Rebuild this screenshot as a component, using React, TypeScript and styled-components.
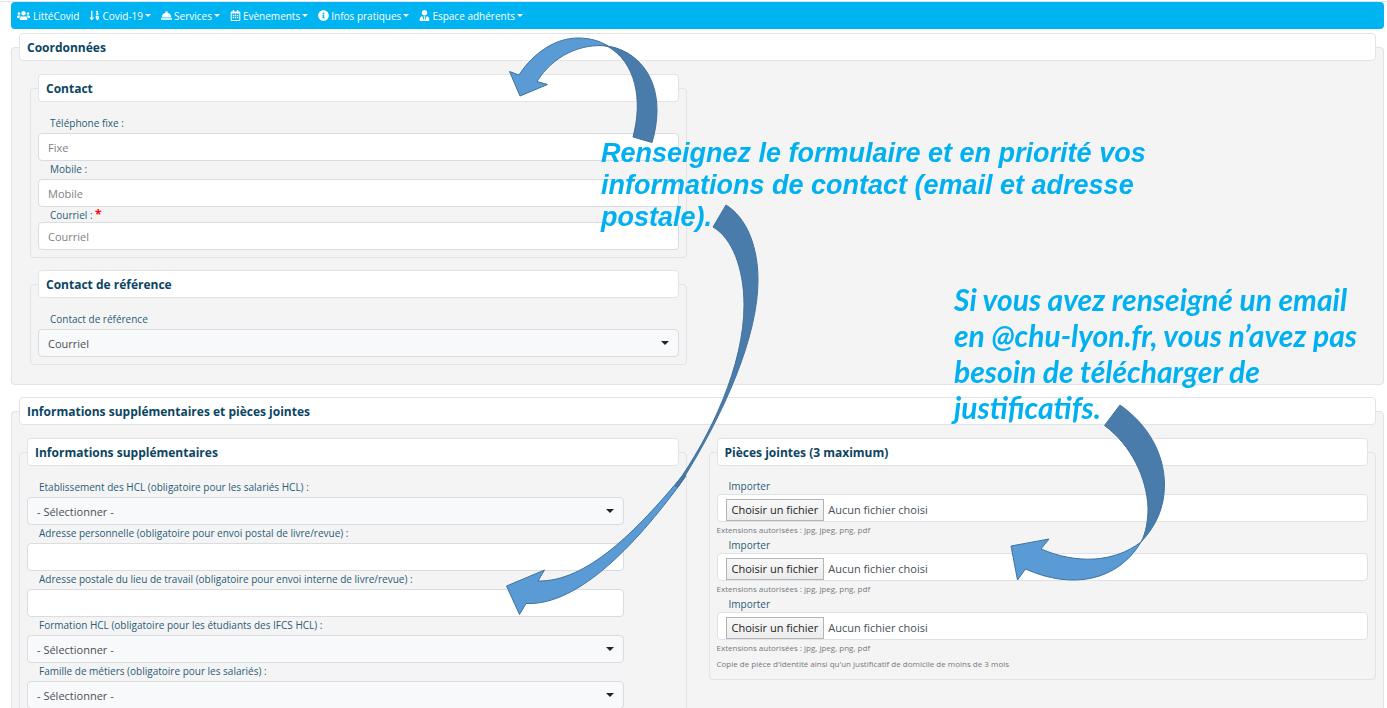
import React from "react";
import styled, { createGlobalStyle } from "styled-components";
import {
  FaUsers,
  FaSortNumericDown,
  FaConciergeBell,
  FaRegCalendarAlt,
  FaInfoCircle,
  FaUserTie,
} from "react-icons/fa";

const GlobalStyle = createGlobalStyle`
  *, *::before, *::after { box-sizing: border-box; }
  body {
    margin: 0;
    background: #fff;
    color: #495057;
    font-family: "Open Sans", "Noto Sans", sans-serif;
    font-size: 11px;
  }
  input, select, button { font: inherit; color: inherit; }
`;

const Page = styled.div`
  position: relative;
  padding-bottom: 24px;
`;

const TopRule = styled.div`
  height: 2px;
  border-bottom: 1px solid #e4e4e4;
`;

const Content = styled.div`
  padding: 0 3px 0 11px;
`;

const Nav = styled.nav`
  display: flex;
  align-items: center;
  gap: 10px;
  height: 27px;
  padding: 0 6px;
  border-radius: 4px;
  background: #00b4f1;
  color: #fff;
  font-size: 10px;
  line-height: 16px;
`;

const NavLink = styled.a`
  display: flex;
  align-items: center;
  gap: 3px;
  color: inherit;
  text-decoration: none;
  white-space: nowrap;
`;

const NavButton = styled.button`
  display: flex;
  align-items: center;
  gap: 2px;
  padding: 0;
  border: 0;
  background: none;
  white-space: nowrap;
  cursor: pointer;

  &::after {
    content: "";
    border-top: 3px solid currentColor;
    border-left: 3px solid transparent;
    border-right: 3px solid transparent;
  }
`;

const Panel = styled.fieldset`
  min-width: 0;
  margin: 0;
  padding: 13px 7px 7px;
  border: 1px solid #e2e3e4;
  border-radius: 4px;
  background: #f4f4f4;
`;

const Section = styled(Panel)<{ $gap: number }>`
  margin-top: ${(p) => p.$gap}px;
  padding-bottom: 19px;
`;

const Title = styled.legend`
  width: 100%;
  height: 28px;
  padding: 0 7px;
  border: 1px solid #e2e3e4;
  border-radius: 4px;
  background: #fff;
  color: #0b4563;
  font-size: 12px;
  font-weight: 700;
  line-height: 27px;
`;

const Columns = styled.div`
  display: grid;
  grid-template-columns: 1fr 1fr;
  gap: 22px;
  align-items: start;
`;

const Stack = styled.div`
  display: grid;
  gap: 12px;
  padding-left: 11px;
`;

const WideFields = styled.div`
  display: grid;
  grid-template-columns: 11fr 1fr;

  & > * { grid-column: 1; }
`;

const Label = styled.label<{ $tight?: boolean }>`
  display: block;
  height: ${(p) => (p.$tight ? 15 : 18)}px;
  padding-left: 12px;
  color: #2a5c76;
  font-size: 10px;
  line-height: ${(p) => (p.$tight ? 15 : 16)}px;
`;

const Required = styled.span`
  color: #f00;
  font-size: 12px;
  font-weight: 700;
`;

const TextBox = styled.input`
  display: block;
  width: 100%;
  height: 28px;
  padding: 0 9px;
  border: 1px solid #d9dce1;
  border-radius: 4px;
  background: #fff;

  &::placeholder { color: #7d8287; opacity: 1; }
`;

const SelectWrap = styled.div`
  position: relative;

  &::after {
    content: "";
    position: absolute;
    top: 12px;
    right: 10px;
    border-top: 4px solid #212529;
    border-left: 4px solid transparent;
    border-right: 4px solid transparent;
    pointer-events: none;
  }
`;

const Select = styled.select`
  display: block;
  width: 100%;
  height: 28px;
  padding: 0 9px;
  border: 1px solid #d9dce1;
  border-radius: 4px;
  background: #f8f9fb;
  appearance: none;
`;

const FileBox = styled.div`
  position: relative;
  display: flex;
  align-items: flex-end;
  gap: 4px;
  height: 28px;
  padding: 0 8px;
  border: 1px solid #dee1e5;
  border-radius: 4px;
  background: #fff;
  line-height: 20px;
`;

const FileInput = styled.input`
  position: absolute;
  inset: 0;
  width: 100%;
  opacity: 0;
  cursor: pointer;
`;

const FileButton = styled.span`
  height: 22px;
  padding: 0 5px;
  border: 1px solid #b4b4b4;
  background: linear-gradient(#f8f8f8, #ececec);
  color: #222;
`;

const FileStatus = styled.span`
  height: 21px;
`;

const Hint = styled.p`
  margin: 0;
  color: #74797e;
  font-size: 8px;
  line-height: 16px;
`;

const Note = styled.p<{ $x: number; $y: number; $w: number }>`
  position: absolute;
  left: ${(p) => p.$x}px;
  top: ${(p) => p.$y}px;
  width: ${(p) => p.$w}px;
  margin: 0;
  color: #00b0f0;
  font-weight: 700;
  font-style: italic;
`;

const ContactNote = styled(Note)`
  font-family: "Liberation Sans", Arial, sans-serif;
  font-size: 27px;
  line-height: 32px;
`;

const ProofNote = styled(Note)`
  font-family: Lato, Carlito, sans-serif;
  font-size: 30px;
  line-height: 36px;
`;

const Arrow = styled.svg<{ $x: number; $y: number }>`
  position: absolute;
  left: ${(p) => p.$x}px;
  top: ${(p) => p.$y}px;
  pointer-events: none;
  stroke: #41719c;
  stroke-width: 1;
  stroke-linejoin: miter;
`;

const menus = [
  { label: "Covid-19", Icon: FaSortNumericDown },
  { label: "Services", Icon: FaConciergeBell },
  { label: "Evènements", Icon: FaRegCalendarAlt },
  { label: "Infos pratiques", Icon: FaInfoCircle },
  { label: "Espace adhérents", Icon: FaUserTie },
];

const details = [
  { id: "etablissement", label: "Etablissement des HCL (obligatoire pour les salariés HCL) :", choice: true },
  { id: "adresse-perso", label: "Adresse personnelle (obligatoire pour envoi postal de livre/revue) :", choice: false },
  { id: "adresse-travail", label: "Adresse postale du lieu de travail (obligatoire pour envoi interne de livre/revue) :", choice: false },
  { id: "formation", label: "Formation HCL (obligatoire pour les étudiants des IFCS HCL) :", choice: true },
  { id: "metiers", label: "Famille de métiers (obligatoire pour les salariés) :", choice: true },
];

function Dropdown({ id, value }: { id: string; value: string }) {
  return (
    <SelectWrap>
      <Select id={id} defaultValue={value}>
        <option>{value}</option>
      </Select>
    </SelectWrap>
  );
}

function Upload({ id }: { id: string }) {
  return (
    <div>
      <Label $tight htmlFor={id}>Importer</Label>
      <FileBox>
        <FileButton>Choisir un fichier</FileButton>
        <FileStatus>Aucun fichier choisi</FileStatus>
        <FileInput id={id} type="file" accept=".jpg,.jpeg,.png,.pdf" />
      </FileBox>
      <Hint>Extensions autorisées : jpg, jpeg, png, pdf</Hint>
    </div>
  );
}

export default function App() {
  return (
    <Page>
      <GlobalStyle />
      <TopRule />
      <Content>
        <Nav>
          <NavLink href="#littecovid">
            <FaUsers size={13} />
            LittéCovid
          </NavLink>
          {menus.map(({ label, Icon }) => (
            <NavButton key={label} type="button">
              <Icon size={11} />
              {label}
            </NavButton>
          ))}
        </Nav>

        <Section $gap={4}>
          <Title>Coordonnées</Title>
          <Columns>
            <Stack>
              <Panel>
                <Title>Contact</Title>
                <Label htmlFor="fixe">Téléphone fixe :</Label>
                <TextBox id="fixe" type="tel" placeholder="Fixe" />
                <Label htmlFor="mobile">Mobile :</Label>
                <TextBox id="mobile" type="tel" placeholder="Mobile" />
                <Label $tight htmlFor="courriel">
                  Courriel : <Required>*</Required>
                </Label>
                <TextBox id="courriel" type="email" placeholder="Courriel" />
              </Panel>
              <Panel>
                <Title>Contact de référence</Title>
                <Label htmlFor="reference">Contact de référence</Label>
                <Dropdown id="reference" value="Courriel" />
              </Panel>
            </Stack>
          </Columns>
        </Section>

        <Section $gap={12}>
          <Title>Informations supplémentaires et pièces jointes</Title>
          <Columns>
            <Panel>
              <Title>Informations supplémentaires</Title>
              <WideFields>
                {details.map(({ id, label, choice }) => (
                  <div key={id}>
                    <Label htmlFor={id}>{label}</Label>
                    {choice ? <Dropdown id={id} value="- Sélectionner -" /> : <TextBox id={id} type="text" />}
                  </div>
                ))}
              </WideFields>
            </Panel>
            <Panel>
              <Title>Pièces jointes (3 maximum)</Title>
              <Upload id="piece-1" />
              <Upload id="piece-2" />
              <Upload id="piece-3" />
              <Hint>Copie de pièce d'identité ainsi qu'un justificatif de domicile de moins de 3 mois</Hint>
            </Panel>
          </Columns>
        </Section>
      </Content>

      <Arrow $x={505} $y={34} width="156" height="112" viewBox="505 34 156 112" aria-hidden="true">
        <path fill="#497cab" d="M598 45C633 46 657 72 657 110C657 121 655 133 652 142.5L633 137C643 100 636 62 607 46Z" />
        <path fill="#5b9bd5" d="M509.5 71.5L519 75C534 52 556 38 578 38C590 38 600 41 608 46C580 43 553 56 537 81.5L547.5 84.5L520 96Z" />
      </Arrow>
      <Arrow $x={502} $y={200} width="260" height="420" viewBox="502 200 260 420" aria-hidden="true">
        <path fill="#5b9bd5" d="M506.5 586L544.5 570L538 581C586 582 636 532 683 475L686 476C640 540 580 606 526 603.5L519.5 614.5Z" />
        <path fill="#497cab" d="M726 205C747 218 758 247 758 280C758 335 726 412 678 487L675 486C711 436 744 365 744 305C744 268 732 238 713 227Z" />
      </Arrow>
      <Arrow $x={1006} $y={400} width="164" height="186" viewBox="1006 400 164 186" aria-hidden="true">
        <path fill="#497cab" d="M1120 405C1147 424 1164 452 1164.5 484C1164.5 508 1156 526 1141 542C1146 533 1148 520 1148 508C1147 478 1131 445 1104.5 425.5Z" />
        <path fill="#5b9bd5" d="M1011 546L1049 539L1041 549C1076 564 1114 563 1141 542C1118 581 1072 590 1025.5 569L1017.5 580Z" />
      </Arrow>

      <ContactNote $x={601} $y={137} $w={560}>
        Renseignez le formulaire et en priorité vos informations de contact (email et adresse postale).
      </ContactNote>
      <ProofNote $x={954} $y={281} $w={416}>
        Si vous avez renseigné un email en @chu-lyon.fr, vous n’avez pas besoin de télécharger de justificatifs.
      </ProofNote>
    </Page>
  );
}
